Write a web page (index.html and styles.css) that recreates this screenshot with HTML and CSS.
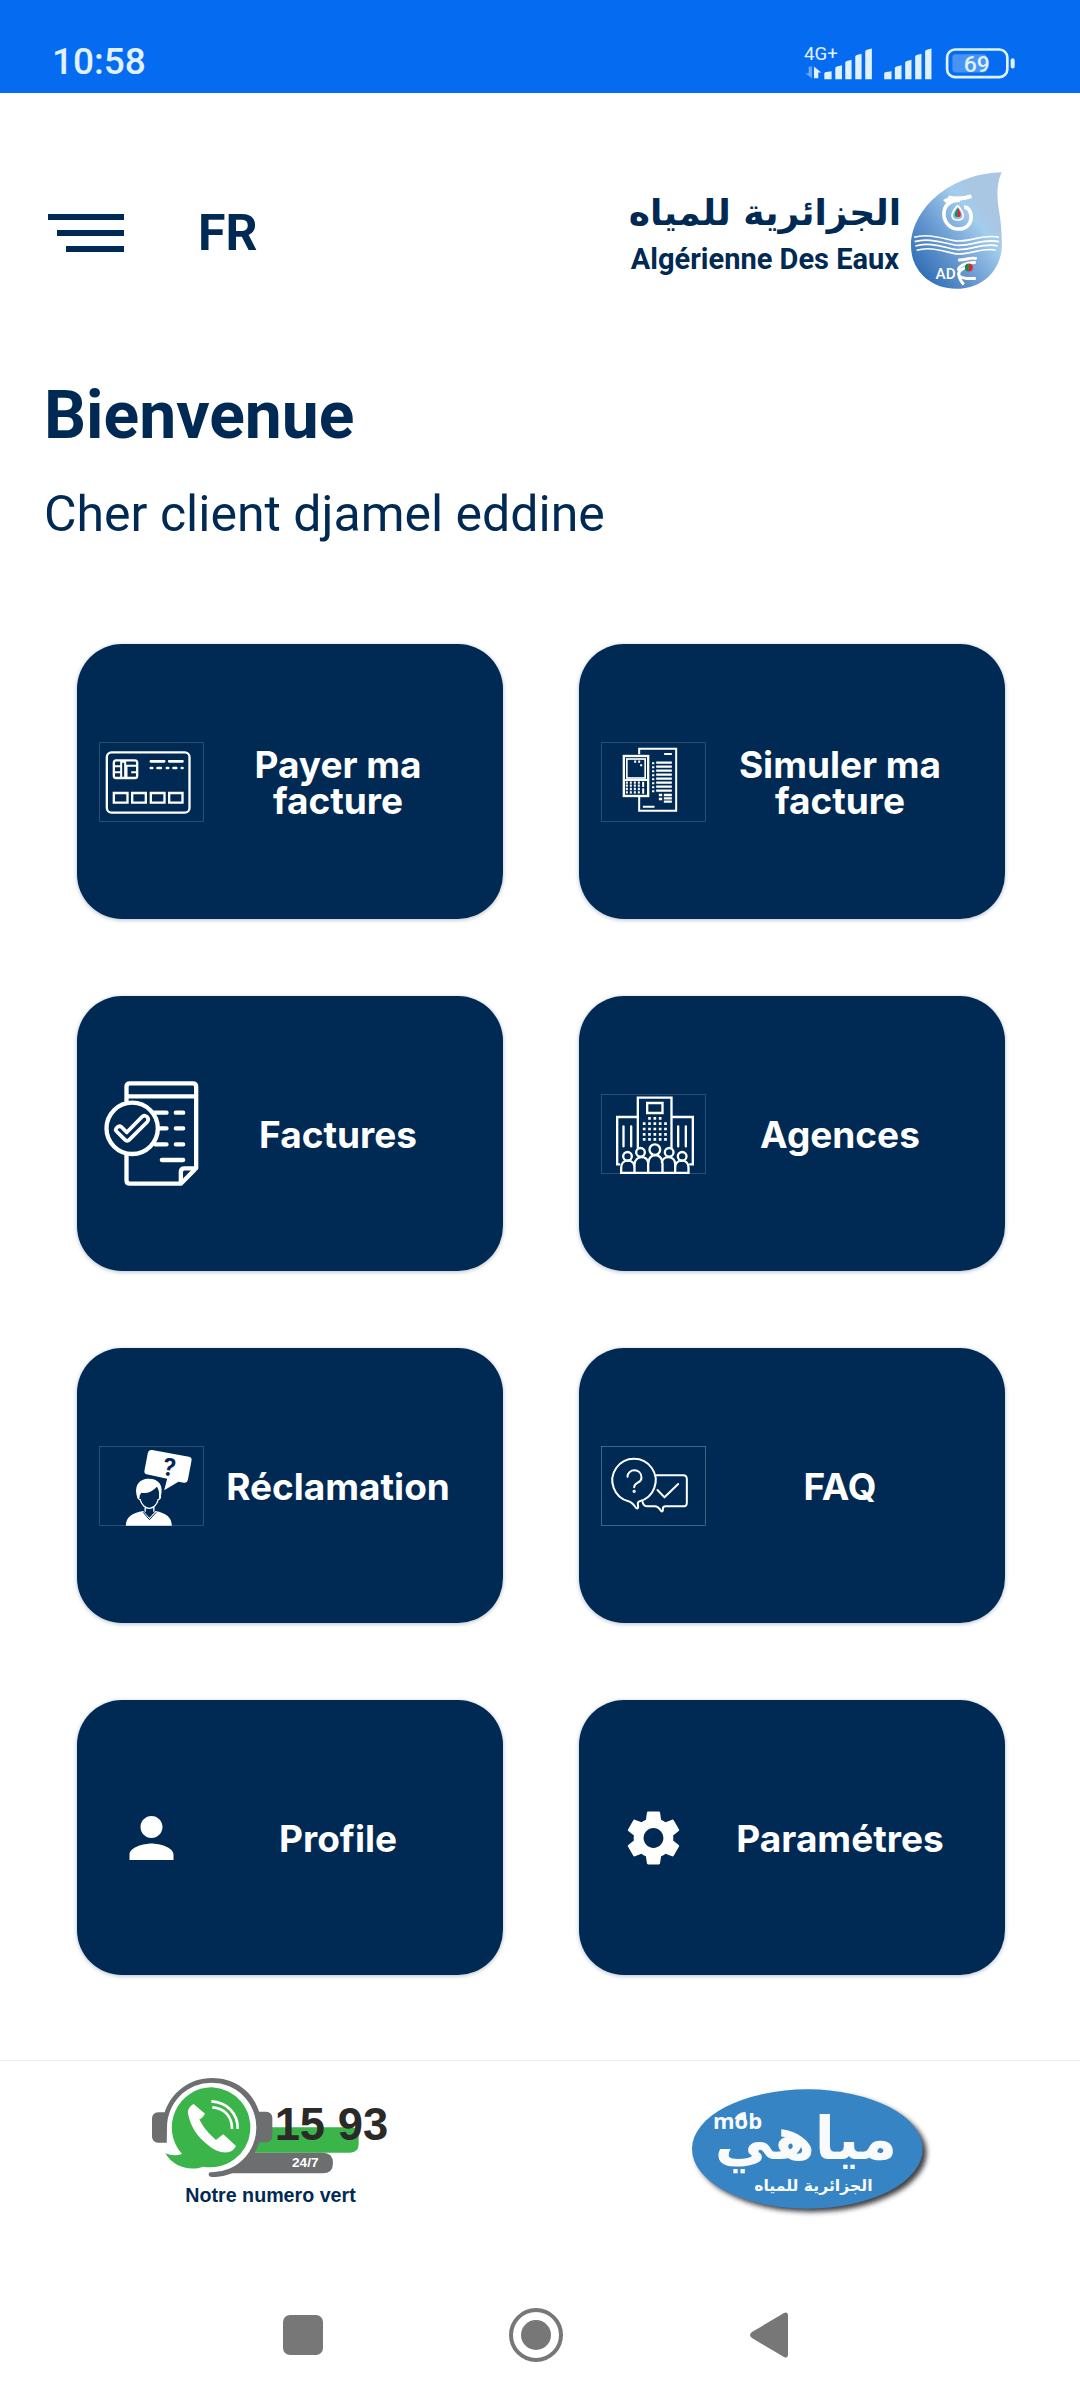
FILE: index.html
```
<!DOCTYPE html>
<html lang="fr">
<head>
<meta charset="utf-8">
<meta name="viewport" content="width=device-width, initial-scale=1">
<title>Algérienne Des Eaux</title>
<link rel="stylesheet" href="styles.css">
</head>
<body>
<div class="status-bar">
  <time class="clock">10:58</time>
  <svg class="status-icons" viewBox="72 60 634 110" fill="#e0f1ff" aria-hidden="true">
    <text x="72" y="110" font-size="56">4G+</text>
    <path d="M86 130h10v35L76 150h10z" opacity=".45"/>
    <path d="M102 130l22 18h-9v17h-13z"/>
    <path d="M133 150q0-4 22-6v24h-22zM166 134q0-4 20-8v42h-20zM196 118q0-4 19-8v58h-19zM226 100q0-4 19-8v76h-19zM256 84q0-4 20-8v92h-20z"/>
    <path d="M313 150q0-4 22-6v24h-22zM345 134q0-4 20-8v42h-20zM376 118q0-4 19-8v58h-19zM406 100q0-4 19-8v76h-19zM436 84q0-4 19-8v92h-19z"/>
    <rect x="502" y="79" width="181" height="83" rx="24" fill="none" stroke="#e0f1ff" stroke-width="8"/>
    <rect x="518" y="93" width="103" height="55" rx="10" opacity=".3"/>
    <rect x="693" y="105" width="12" height="31" rx="6"/>
    <text x="552" y="147" font-size="69" font-weight="500">69</text>
  </svg>
</div>

<main class="page">
  <header class="header">
    <button class="menu-button" type="button" aria-label="Menu">
      <svg width="76" height="38" viewBox="0 0 76 38" fill="currentColor"><path d="M0 0h76v6H0zM9 16h67v6H9zM18 32h58v6H18z"/></svg>
    </button>
    <button class="lang-button" type="button">FR</button>
    <div class="brand">
      <div class="brand-text">
        <span class="brand-ar" lang="ar" dir="rtl">الجزائرية للمياه</span>
        <span class="brand-fr">Algérienne Des Eaux</span>
      </div>
      <svg class="drop" viewBox="903 66 274 351" aria-hidden="true">
        <defs>
          <linearGradient id="drop" x1=".15" y1=".95" x2=".8" y2=".3"><stop offset="0" stop-color="#2f6cb5"/><stop offset=".45" stop-color="#6a9bd2"/><stop offset=".85" stop-color="#a3cdec"/><stop offset="1" stop-color="#a9c6e3"/></linearGradient>
        </defs>
        <path fill="url(#drop)" d="M1176 66C1158 104 1162 150 1170 195C1176 235 1177 262 1176 300C1166 375 1108 417 1040 417C960 417 903 360 903 288C903 184 1010 72 1176 66z"/>
        <g fill="none" stroke="#fff" stroke-width="5">
          <path d="M912 262c40-12 80 2 120 10s90-22 136-10"/><path d="M914 275c40-12 80 2 120 10s90-22 134-10"/><path d="M916 288c40-12 80 2 118 10s90-22 130-10"/><path d="M920 301c40-12 76 2 114 10s90-22 124-10"/>
          <path stroke-width="12" d="M1015 142q36 8 70-4M1004 154c12-10 30-6 50-8"/>
          <path stroke-width="11" d="M1050 150c-70 0-56 87-5 87c52 0 46-66 18-66"/>
          <path stroke-width="5" d="M1044 166c-26 28-20 44 0 44s24-16 0-44"/>
        </g>
        <path fill="#12894a" d="M1044 173c-12 18-12 28 0 28z"/><path fill="#e3202b" d="M1044 173c12 18 12 28 0 28z"/>
        <text x="977" y="389" font-size="46" font-weight="500" fill="#fff">AD</text>
        <path fill="none" stroke="#fff" stroke-width="9" d="M1045 330c20 3 36-10 56-4M1098 338c-34-2-54 14-52 24M1070 352c-30 12-32 30 0 34h28M1046 370c2 18 8 26 16 34"/>
        <path fill="#12894a" d="M1077 341a12 12 0 0 0 0 24z"/><path fill="#e3202b" d="M1077 341a12 12 0 0 1 0 24z"/>
      </svg>
    </div>
  </header>

  <h1 class="welcome">Bienvenue</h1>
  <p class="client">Cher client djamel eddine</p>

  <nav class="tiles" aria-label="Services">
    <a class="tile" href="#payer">
      <svg class="tile-icon" viewBox="88 333 314 240" aria-hidden="true">
        <rect class="frame" x="89" y="335" width="312" height="236"/>
        <g fill="none" stroke="#fff" stroke-width="7">
          <rect x="111" y="364" width="248" height="181" rx="14"/>
          <rect x="132" y="388" width="70" height="53" rx="7"/>
          <path stroke-width="6" d="M132 406h22M132 424h22M154 390v51M170 440v-36h30M184 424h18M154 392h12v48"/>
          <path stroke-width="8" stroke-linecap="round" d="M243 391h40M298 391h40"/>
          <path stroke-width="8" stroke-linecap="round" d="M243 411h4M263 411h10M291 411h4M311 411h8M336 411h2"/>
          <path d="M132 486h41v29h-41zM187 486h41v29h-41zM243 486h41v29h-41zM298 486h40v29h-40z"/>
        </g>
      </svg>
      <span class="tile-label">Payer ma facture</span>
    </a>
    <a class="tile" href="#simuler">
      <svg class="tile-icon" viewBox="94 333 314 240" aria-hidden="true">
        <rect class="frame" x="95" y="335" width="312" height="236"/>
        <g fill="none" stroke="#fff">
          <path stroke-width="6" d="M208 370v-17h111v186H208v-42"/>
          <rect x="162" y="375" width="73" height="120" stroke-width="7"/>
          <rect x="171" y="384" width="55" height="57" stroke-width="5"/>
          <path stroke-width="6" d="M162 447h73M283 369h23M219 527h35"/>
          <path stroke-width="7" stroke-dasharray="6 6" d="M168 455h46M168 464h46M168 474h46M168 484h46M250 394v90M193 392h20"/>
          <path stroke-width="6" d="M220 452v16M220 472v16M214 400v6"/>
          <path stroke-width="7" d="M259 395h47M259 407h47M259 419h47M259 431h47M259 443h47M259 455h47M259 467h47M259 479h47M267 492h10M267 504h10M282 492h24M282 502h24M282 512h24"/>
        </g>
      </svg>
      <span class="tile-label">Simuler ma facture</span>
    </a>
    <a class="tile" href="#factures">
      <svg class="tile-icon tall" viewBox="88 123 314 315" fill="none" stroke="#fff" stroke-width="13" stroke-linecap="round" stroke-linejoin="round" aria-hidden="true">
        <path d="M170 184v-44q0-10 10-10h189q10 0 10 10v245l-46 46H180q-10 0-10-10v-78M172 169h206M333 430v-34q0-11 11-11h34"/>
        <circle cx="187" cy="265" r="77"/>
        <path d="M252 218h38M318 218h22M268 265h22M318 265h22M256 313h34M318 313h22M276 360h64"/>
        <path stroke-width="11" d="M139 273q-3-4 0-8q8-10 16-4l16 16l45-46q7-8 15-1q8 8 1 16l-53 53q-7 7-14 0z"/>
      </svg>
      <span class="tile-label">Factures</span>
    </a>
    <a class="tile" href="#agences">
      <svg class="tile-icon" viewBox="94 160 314 240" aria-hidden="true">
        <rect class="frame" x="95" y="161" width="312" height="238"/>
        <g fill="none" stroke="#fff" stroke-width="7">
          <path d="M151 371h-9V229h62M204 322V171h101v151M308 229h61v142h-11"/>
          <path d="M232 187h46v30h-46z"/>
          <path stroke-linecap="round" d="M161 257v60M184 257v60M325 257v60M348 257v60"/>
          <path stroke-width="8" stroke-dasharray="8 8" d="M235 233h40M219 249h72M219 265h72M219 281h72M219 296h72"/>
          <circle cx="255" cy="327" r="16"/><circle cx="212" cy="335" r="13"/><circle cx="298" cy="335" r="13"/><circle cx="173" cy="347" r="13"/><circle cx="337" cy="347" r="13"/>
          <path d="M154 397v-16c0-28 40-28 40 0v16zM194 397v-26c2-28 40-28 41-4M276 367c2-24 40-24 40 4v26M316 397v-16c0-28 40-28 40 0v16zM235 397v-28c0-34 43-34 43 0v28zM190 397h128"/>
        </g>
      </svg>
      <span class="tile-label">Agences</span>
    </a>
    <a class="tile" href="#reclamation">
      <svg class="tile-icon" viewBox="88 135 314 240" aria-hidden="true">
        <rect class="frame" x="89" y="136" width="312" height="237"/>
        <path fill="#fff" d="M247 147l110 20q10 2 8 12l-11 58q-2 10-12 8l-16-3l-43 26l9-35l-62-13q-8-2-6-12l10-52q3-11 13-9z"/>
        <text transform="rotate(10 298 196)" x="280" y="224" font-size="74" font-weight="700" fill="#002a54">?</text>
        <path fill="#fff" d="M203 290c-12-34 4-57 34-57c31 0 46 22 35 56l-5 6c2-20 0-30-6-38c-18 20-36 20-46 18c-6 6-6 10-6 18z"/>
        <path fill="none" stroke="#fff" stroke-width="4" d="M206 280c-5 12 2 16 5 16c4 16 16 26 27 26s24-10 27-26c4 0 10-6 6-16M226 318v14M252 318v14"/>
        <path fill="#fff" d="M168 374c0-28 22-38 52-44l19 20l18-20c30 6 49 18 49 44z"/>
        <path fill="none" stroke="#002a54" stroke-width="3" d="M220 334l19 22l20-22"/>
      </svg>
      <span class="tile-label">Réclamation</span>
    </a>
    <a class="tile" href="#faq">
      <svg class="tile-icon" viewBox="94 135 314 240" aria-hidden="true">
        <rect class="frame bright" x="95" y="136" width="312" height="237"/>
        <g fill="none" stroke="#fff" stroke-width="6" stroke-linecap="round" stroke-linejoin="round">
          <path d="M176 301a65 65 0 1 1 33 0q-6 2-5 8l1 10q-1 6-7 1c-8-11-12-17-22-19z"/>
          <path d="M259 223h81q11 0 11 11v71q0 11-11 11h-53q-8 0-8 8v5q-2 5-6 0q-8-13-18-13h-22q-12 0-15-14"/>
          <path d="M263 267l21 22l41-40M173 227c0-25 42-27 42 3c0 18-22 12-22 29"/>
          <circle cx="193" cy="271" r="2"/>
        </g>
      </svg>
      <span class="tile-label">FAQ</span>
    </a>
    <a class="tile" href="#profile">
      <svg class="tile-icon glyph" viewBox="0 0 24 24" fill="#fff" aria-hidden="true"><path d="M12 12c2.210 0 4-1.790 4-4s-1.790-4-4-4-4 1.790-4 4 1.790 4 4 4zm0 2c-2.670 0-8 1.340-8 4v2h16v-2c0-2.660-5.330-4-8-4z"/></svg>
      <span class="tile-label">Profile</span>
    </a>
    <a class="tile" href="#parametres">
      <svg class="tile-icon glyph" viewBox="0 0 24 24" fill="#fff" aria-hidden="true"><path d="M19.140 12.940c.04-.3.06-.61.06-.94 0-.32-.02-.64-.07-.94l2.030-1.580c.18-.14.23-.41.12-.61l-1.920-3.320c-.12-.22-.37-.29-.59-.22l-2.390.96c-.5-.38-1.030-.7-1.620-.94l-.36-2.540c-.04-.24-.24-.41-.48-.41h-3.840c-.24 0-.43.17-.47.41l-.36 2.540c-.59.24-1.130.57-1.620.94l-2.390-.96c-.22-.08-.47 0-.59.22L2.740 8.870c-.12.21-.08.47.12.61l2.030 1.580c-.05.3-.09.63-.09.94s.02.64.07.94l-2.030 1.580c-.18.14-.23.41-.12.61l1.920 3.320c.12.22.37.29.59.22l2.390-.96c.5.38 1.030.7 1.620.94l.36 2.540c.05.24.24.41.48.41h3.840c.24 0 .44-.17.47-.41l.36-2.540c.59-.24 1.130-.56 1.620-.94l2.390.96c.22.08.47 0 .59-.22l1.920-3.320c.12-.22.07-.47-.12-.61l-2.010-1.580zM12 15.600c-1.980 0-3.600-1.620-3.600-3.600s1.620-3.600 3.600-3.600 3.600 1.620 3.600 3.600-1.620 3.600-3.600 3.600z"/></svg>
      <span class="tile-label">Paramétres</span>
    </a>
  </nav>
</main>

<footer class="footer">
  <a class="footer-link" href="tel:1593" aria-label="Notre numero vert 15 93">
    <svg class="badge" viewBox="0 33 840 477">
      <path fill="#3bb54a" d="M370 232h292q24 0 24 24v26q0 26-26 26H360z"/>
      <path fill="#6d6e70" d="M330 308h248q31 0 31 31t-31 31H290z"/>
      <rect x="66" y="187" width="70" height="91" rx="18" fill="#6d6e70"/>
      <rect x="360" y="185" width="67" height="92" rx="18" fill="#6d6e70"/>
      <path fill="#6d6e70" d="M103 190C122 128 178 84 246 84C320 84 372 130 388 188V276C368 340 320 380 246 381q-10 0-10-8q0-7 10-7z"/>
      <path fill="#fff" d="M111 232A134 134 0 1 1 379 232A134 134 0 0 1 246 367L110 300z"/>
      <path fill="#3bb54a" d="M246 112A120 120 0 1 1 220 350C180 364 130 352 106 310q26 10 50 2A120 120 0 0 1 246 112z"/>
      <path fill="#fff" d="M191 162l34 29q-8 14-17 17c14 28 28 42 50 62q12-10 22-17l38 35q-8 16-24 19c-24 2-40-6-60-22c-32-26-52-54-60-94c-2-12 6-24 17-29z"/>
      <path fill="none" stroke="#fff" stroke-width="8" d="M244 154c46 2 80 36 79 83M247 172c36 2 60 28 59 65"/>
      <text class="arial" x="434" y="270" font-size="136" fill="#2b2a29">15 93</text>
      <text class="arial" x="486" y="351" font-size="41" fill="#fff">24/7</text>
      <text class="arial" x="166" y="455" font-size="59" fill="#002a54">Notre numero vert</text>
    </svg>
  </a>
  <a class="footer-link" href="#mob" aria-label="mob مياهي">
    <svg class="badge" viewBox="0 33 840 477">
      <defs><filter id="soft" x="-10%" y="-10%" width="120%" height="125%"><feGaussianBlur stdDeviation="8"/></filter></defs>
      <ellipse cx="424" cy="308" rx="346" ry="178" fill="#2d2d30" opacity=".9" filter="url(#soft)"/>
      <ellipse cx="412" cy="297" rx="346" ry="179" fill="#3784c5"/>
      <g fill="#f8fafc">
        <text class="mob" x="129" y="238" font-size="66">mob</text>
        <path d="M194 208q4-18 32-23q4 10 2 26z"/>
        <text class="arabic" x="408" y="328" font-size="176" text-anchor="middle" lang="ar">مياهي</text>
        <text class="arabic" x="430" y="422" font-size="47" text-anchor="middle" lang="ar">الجزائرية للمياه</text>
      </g>
    </svg>
  </a>
</footer>

<div class="system-nav">
  <button type="button" aria-label="Applications récentes"><svg viewBox="0 0 54 54"><rect x="7" y="7" width="40" height="40" rx="7"/></svg></button>
  <button type="button" aria-label="Accueil"><svg viewBox="0 0 54 54"><circle cx="27" cy="27" r="25" fill="none" stroke="#777" stroke-width="4"/><circle cx="27" cy="27" r="15"/></svg></button>
  <button type="button" aria-label="Retour"><svg viewBox="0 0 54 54"><path d="M10 24L42 5q4-2 4 3v38q0 5-4 3L10 30q-4-3 0-6z"/></svg></button>
</div>
</body>
</html>
```
FILE: styles.css
```
:root {
  --navy: #002a54;
  --blue: #056cf2;
}

* { box-sizing: border-box; }

body {
  margin: 0;
  min-height: 100vh;
  display: flex;
  flex-direction: column;
  background: #fff;
  color: var(--navy);
  font-family: Roboto, sans-serif;
}

button {
  padding: 0;
  border: 0;
  background: none;
  color: inherit;
  font: inherit;
}

svg { display: block; }

.status-bar {
  display: flex;
  align-items: center;
  justify-content: space-between;
  height: 93px;
  padding: 30px 65px 0 52px;
  background: var(--blue);
  color: #e0f1ff;
}

.clock {
  font-size: 37px;
  line-height: 44px;
  font-weight: 500;
}

.status-icons {
  width: 211px;
  height: 37px;
}

.header {
  display: flex;
  align-items: center;
  padding: 79px 78px 0 48px;
}

.menu-button,
.lang-button {
  padding-top: 5px;
}

.lang-button {
  margin-left: 74px;
  font-size: 50px;
  line-height: 60px;
  font-weight: 700;
}

.brand {
  display: flex;
  align-items: center;
  gap: 10px;
  margin-left: auto;
}

.brand-text {
  display: flex;
  flex-direction: column;
  align-items: center;
  padding-top: 8px;
  white-space: nowrap;
  font-weight: 700;
}

.brand-ar {
  font-family: "DejaVu Sans", sans-serif;
  font-size: 36px;
  line-height: 48px;
}

.brand-fr {
  font-size: 29px;
  line-height: 44px;
}

.drop {
  width: 91px;
  height: 117px;
}

.welcome {
  margin: 88px 44px 0;
  font-size: 66px;
  line-height: 78px;
  font-weight: 700;
}

.client {
  margin: 29px 44px 0;
  font-size: 50px;
  line-height: 60px;
}

.tiles {
  display: grid;
  grid-template-columns: repeat(2, minmax(0, 1fr));
  gap: 77px 76px;
  padding: 100px 75px 85px 77px;
}

.tile {
  display: flex;
  align-items: center;
  min-height: 275px;
  padding: 0 21px 0 22px;
  border-radius: 45px;
  background: var(--navy);
  box-shadow: 0 1px 4px rgba(0, 42, 84, .3);
  color: #fff;
  text-decoration: none;
}

.tile-icon {
  flex: none;
  width: 105px;
  height: 80px;
}

.tile-icon.tall { height: 105px; }

.tile-icon.glyph { height: 66px; }

.frame {
  fill: none;
  stroke: #fff;
  stroke-opacity: .25;
  stroke-width: 2;
}

.frame.bright { stroke-opacity: .4; }

.tile-label {
  flex: 1;
  padding: 2px 30px 0 20px;
  font-family: Inter, sans-serif;
  font-size: 37px;
  line-height: 36px;
  font-weight: 700;
  text-align: center;
}

.footer {
  display: grid;
  grid-template-columns: 1fr 1fr;
  justify-items: center;
  border-top: 1px solid #eee;
}

.badge {
  width: 280px;
  height: 159px;
}

.arial {
  font-family: "Liberation Sans", sans-serif;
  font-weight: 700;
}

.mob {
  font-family: "Open Sans", sans-serif;
  font-weight: 700;
}

.arabic {
  font-family: "DejaVu Sans", sans-serif;
  font-weight: 700;
}

.system-nav {
  display: flex;
  justify-content: center;
  gap: 179px;
  margin-top: auto;
  padding: 40px 8px 38px 0;
}

.system-nav svg {
  width: 54px;
  height: 54px;
  fill: #777;
}
```
